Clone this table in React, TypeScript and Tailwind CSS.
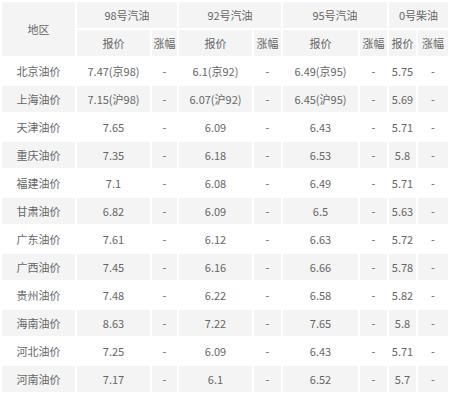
import React from 'react';

type Row = {
    name: string;
    p98: string;
    p92: string;
    p95: string;
    p0: string;
};

const rows: Row[] = [
    { name: '北京油价', p98: '7.47(京98)', p92: '6.1(京92)', p95: '6.49(京95)', p0: '5.75' },
    { name: '上海油价', p98: '7.15(沪98)', p92: '6.07(沪92)', p95: '6.45(沪95)', p0: '5.69' },
    { name: '天津油价', p98: '7.65', p92: '6.09', p95: '6.43', p0: '5.71' },
    { name: '重庆油价', p98: '7.35', p92: '6.18', p95: '6.53', p0: '5.8' },
    { name: '福建油价', p98: '7.1', p92: '6.08', p95: '6.49', p0: '5.71' },
    { name: '甘肃油价', p98: '6.82', p92: '6.09', p95: '6.5', p0: '5.63' },
    { name: '广东油价', p98: '7.61', p92: '6.12', p95: '6.63', p0: '5.72' },
    { name: '广西油价', p98: '7.45', p92: '6.16', p95: '6.66', p0: '5.78' },
    { name: '贵州油价', p98: '7.48', p92: '6.22', p95: '6.58', p0: '5.82' },
    { name: '海南油价', p98: '8.63', p92: '7.22', p95: '7.65', p0: '5.8' },
    { name: '河北油价', p98: '7.25', p92: '6.09', p95: '6.43', p0: '5.71' },
    { name: '河南油价', p98: '7.17', p92: '6.1', p95: '6.52', p0: '5.7' },
];

export default function App() {
    const cell = 'h-[26px] p-0 text-center align-middle font-normal whitespace-nowrap';
    const head = `${cell} bg-[#f4f4f4]`;

    return (
        <div className="w-[450px] h-[400px] overflow-hidden bg-white text-[11px] text-[#666] font-['Noto_Sans_CJK_SC','Noto_Sans',sans-serif]">
            <table className="table-fixed w-[450px] border-separate border-spacing-[2px]">
                <colgroup>
                    <col className="w-[73px]" />
                    <col className="w-[73px]" />
                    <col className="w-[25px]" />
                    <col className="w-[73px]" />
                    <col className="w-[27px]" />
                    <col className="w-[75px]" />
                    <col className="w-[27px]" />
                    <col className="w-[27px]" />
                    <col className="w-[30px]" />
                </colgroup>
                <thead>
                    <tr>
                        <th rowSpan={2} className={head}>地区</th>
                        <th colSpan={2} className={head}>98号汽油</th>
                        <th colSpan={2} className={head}>92号汽油</th>
                        <th colSpan={2} className={head}>95号汽油</th>
                        <th colSpan={2} className={head}>0号柴油</th>
                    </tr>
                    <tr>
                        <th className={head}>报价</th>
                        <th className={head}>涨幅</th>
                        <th className={head}>报价</th>
                        <th className={head}>涨幅</th>
                        <th className={head}>报价</th>
                        <th className={head}>涨幅</th>
                        <th className={head}>报价</th>
                        <th className={head}>涨幅</th>
                    </tr>
                </thead>
                <tbody>
                    {rows.map((r, i) => {
                        const td = `${cell} ${i % 2 === 1 ? 'bg-[#f4f4f4]' : 'bg-white'}`;
                        return (
                            <tr key={r.name}>
                                <td className={td}>{r.name}</td>
                                <td className={td}>{r.p98}</td>
                                <td className={td}>-</td>
                                <td className={td}>{r.p92}</td>
                                <td className={td}>-</td>
                                <td className={td}>{r.p95}</td>
                                <td className={td}>-</td>
                                <td className={td}>{r.p0}</td>
                                <td className={td}>-</td>
                            </tr>
                        );
                    })}
                </tbody>
            </table>
        </div>
    );
}
